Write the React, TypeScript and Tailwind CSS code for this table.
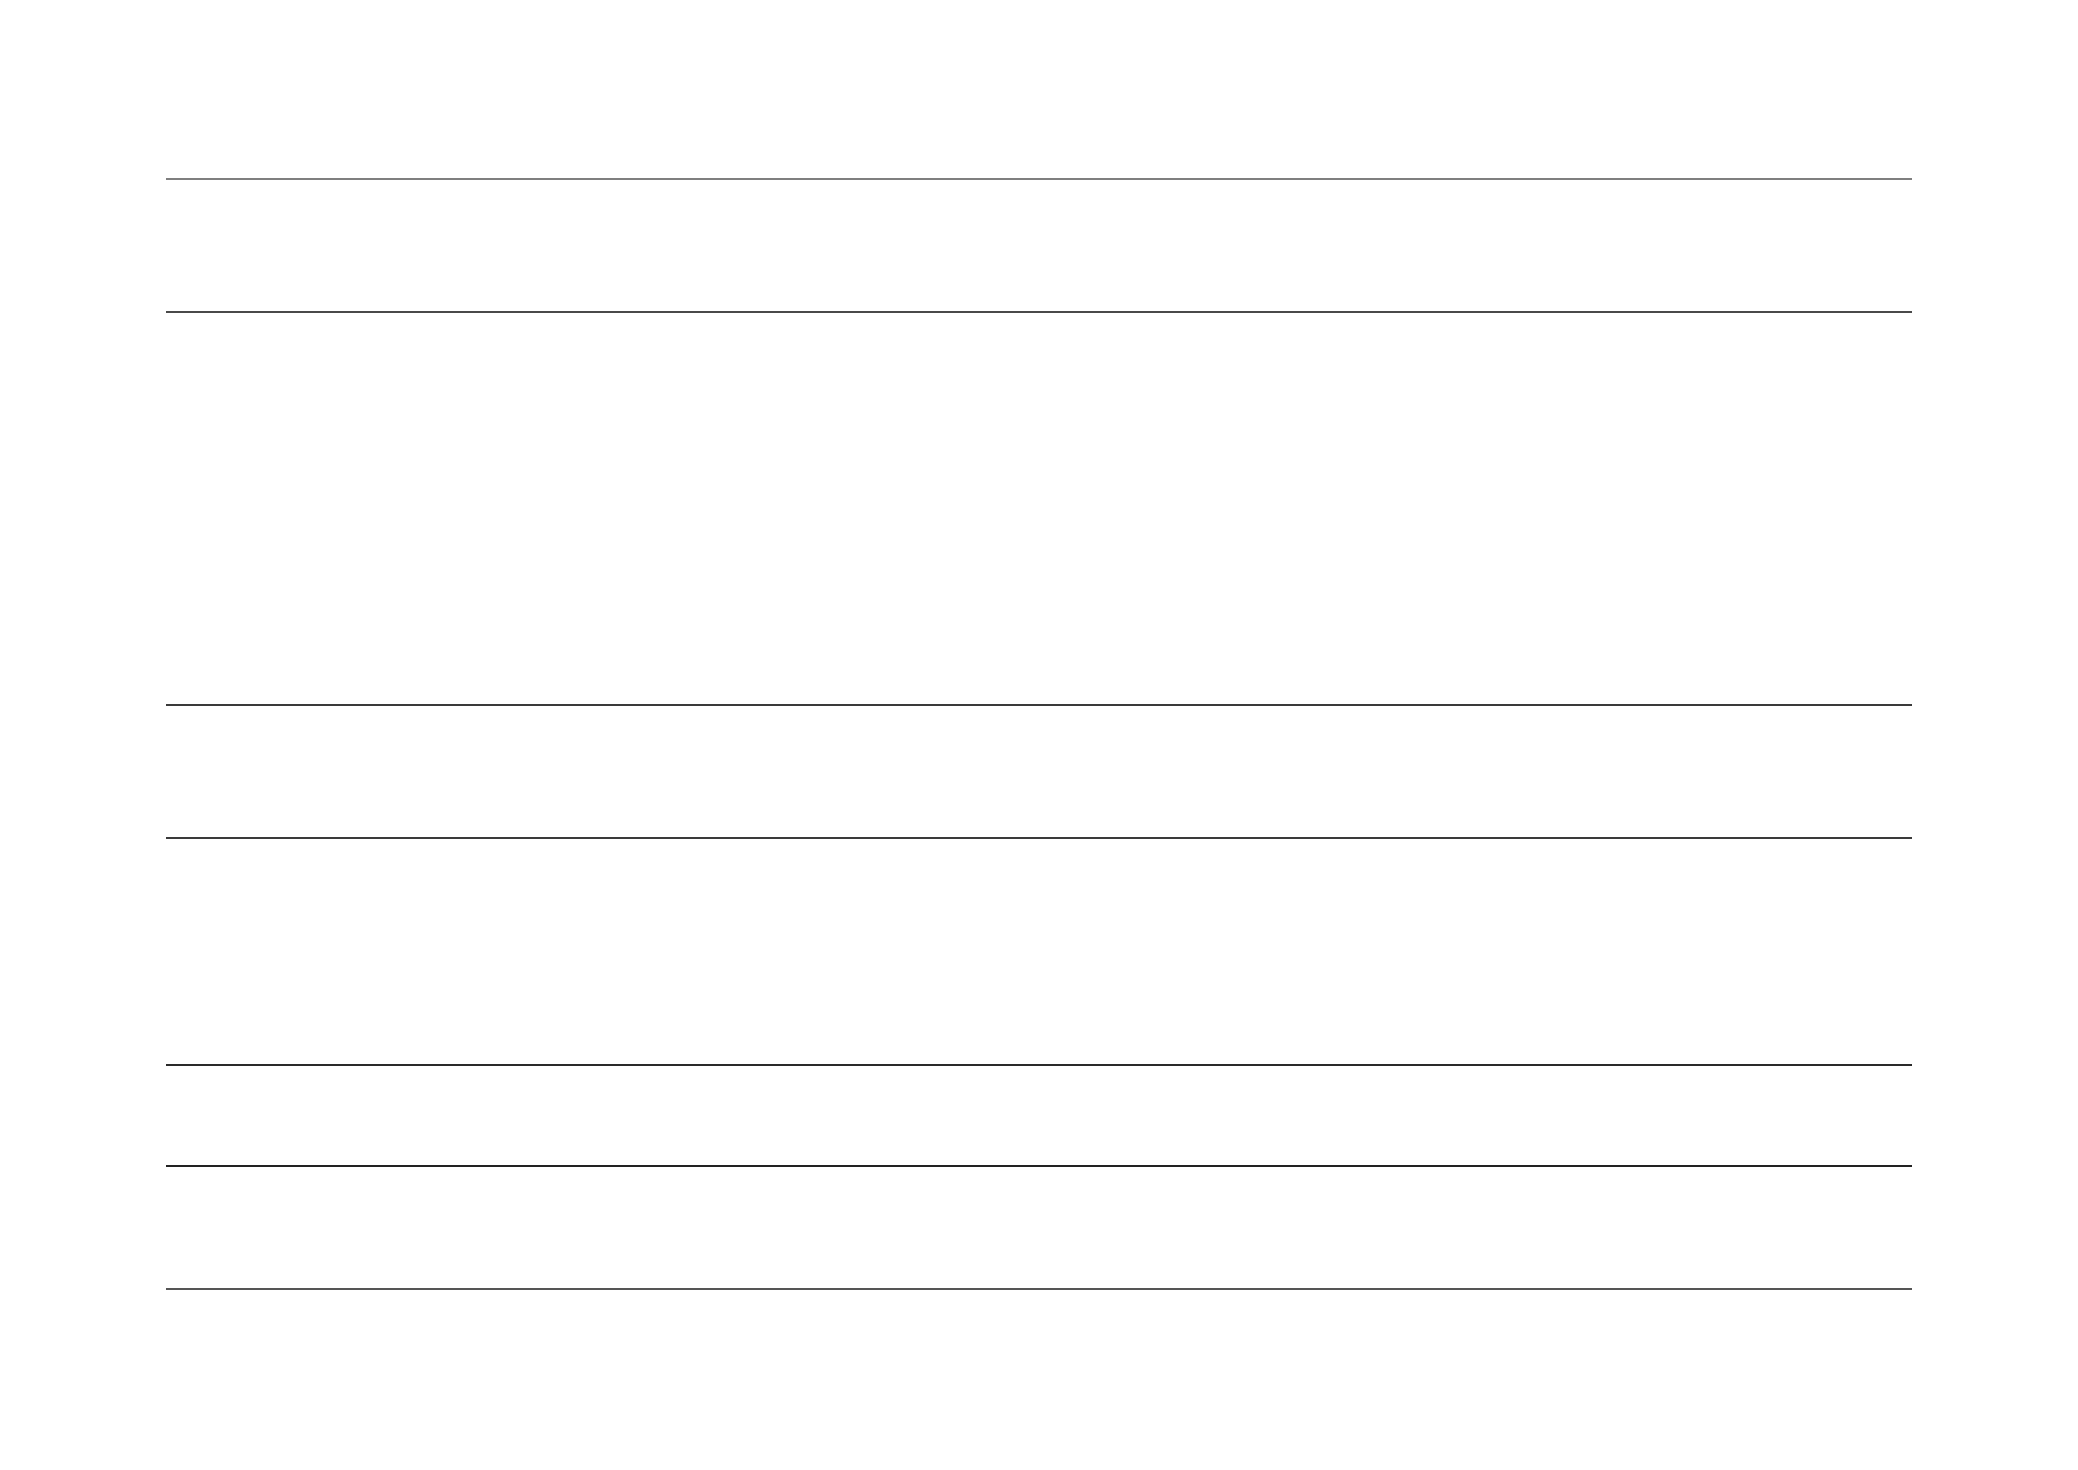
const rows = [
  { h: "h-[133px]", line: "border-[#7f7f7f]" },
  { h: "h-[393px]", line: "border-[#4a4a4a]" },
  { h: "h-[133px]", line: "border-[#3a3a3a]" },
  { h: "h-[227px]", line: "border-[#3a3a3a]" },
  { h: "h-[101px]", line: "border-[#2a2a2a]" },
  { h: "h-[123px]", line: "border-[#222222]" }
];

const cols = [0, 1, 2, 3, 4];

export default function App() {
  return (
    <div className="min-h-[1470px] w-full bg-white pt-[178px] pl-[166px] font-['Liberation_Sans',sans-serif]">
      <div className="flex w-[1746px] flex-col border-b-2 border-[#555555]">
        {rows.map((row, i) => (
          <div
            key={i}
            className={`grid grid-cols-[362px_882px_272px_151px_79px] border-t-2 ${row.h} ${row.line}`}
          >
            {cols.map((c) => (
              <div key={c} className="min-w-0" />
            ))}
          </div>
        ))}
      </div>
    </div>
  );
}
